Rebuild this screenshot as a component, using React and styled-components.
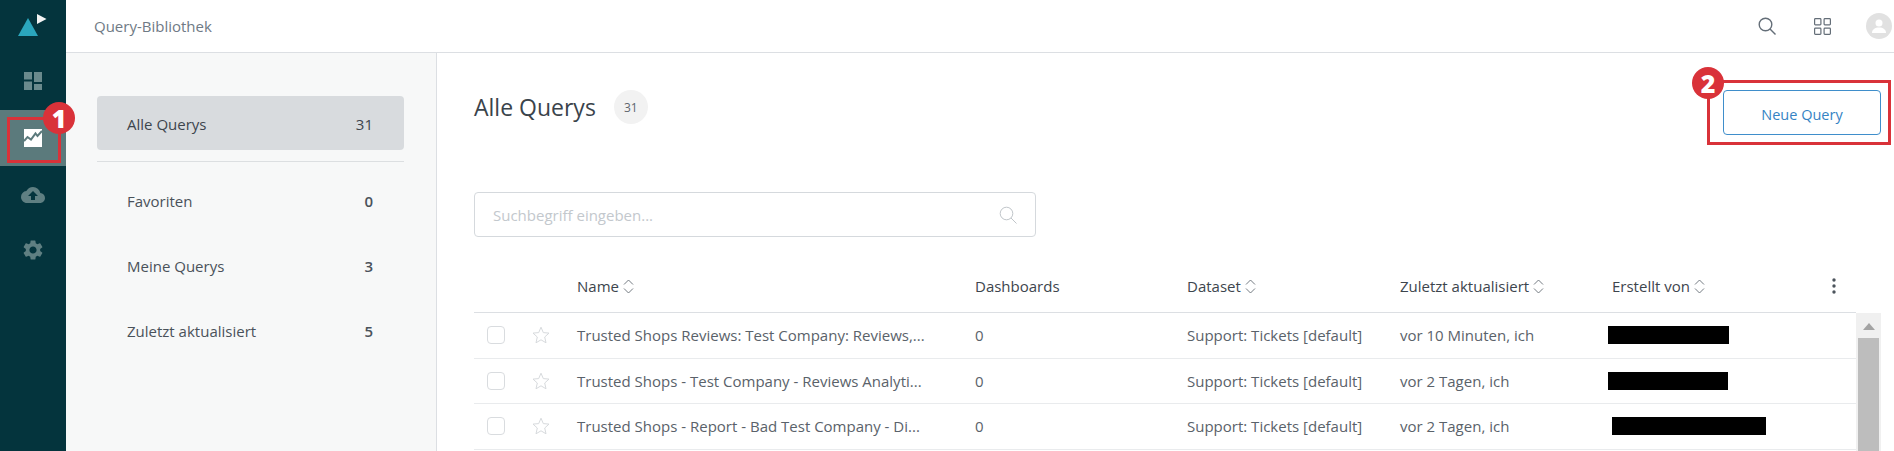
import React from "react";
import styled, { createGlobalStyle } from "styled-components";
import { MdCloudUpload, MdSettings } from "react-icons/md";

const Global = createGlobalStyle`
  html, body { margin: 0; padding: 0; background: #fff; }
  body { font-family: "Open Sans", "Noto Sans", Arial, sans-serif; color: #3a424a; }
  * { box-sizing: border-box; }
`;

const Page = styled.div`
  display: flex;
  width: 1894px;
  height: 451px;
  overflow: hidden;
  background: #fff;
`;

const Sidebar = styled.nav`
  width: 66px;
  flex: none;
  background: #04343d;
  display: flex;
  flex-direction: column;
`;

const Logo = styled.div`
  height: 52px;
  display: flex;
  padding: 14px 0 0 18px;
`;

const NavItem = styled.div`
  position: relative;
  height: ${(p) => p.$h}px;
  display: flex;
  align-items: center;
  justify-content: center;
  color: #5f7f82;
  background: ${(p) => (p.$active ? "#5b7a7c" : "transparent")};
`;

const Badge = styled.span`
  position: absolute;
  left: ${(p) => p.$x}px;
  top: ${(p) => p.$y}px;
  width: 32px;
  height: 32px;
  border-radius: 50%;
  background: #d93239;
  color: #fff;
  font-family: "Open Sans", sans-serif;
  font-weight: 800;
  font-size: 25px;
  line-height: 32px;
  text-align: center;
  z-index: 3;
`;

const NavBox = styled.span`
  position: absolute;
  left: 7px;
  top: 7px;
  width: 54px;
  height: 46px;
  border: 3px solid #d93239;
`;

const Main = styled.div`
  flex: 1;
  min-width: 0;
  display: flex;
  flex-direction: column;
`;

const Header = styled.header`
  height: 53px;
  flex: none;
  border-bottom: 1px solid #dcdfe3;
  display: flex;
  align-items: center;
  padding: 0 2px 0 28px;
`;

const HeaderTitle = styled.div`
  flex: 1;
  font-size: 15px;
  color: #6f7a85;
`;

const HeaderIcons = styled.div`
  display: flex;
  align-items: center;
  color: #646e78;
`;

const IconSlot = styled.span`
  display: flex;
  margin-right: ${(p) => p.$mr}px;
`;

const Avatar = styled.div`
  width: 26px;
  height: 26px;
  border-radius: 50%;
  background: #e1e1e1;
  display: flex;
  align-items: center;
  justify-content: center;
`;

const Body = styled.div`
  flex: 1;
  min-height: 0;
  display: flex;
`;

const Panel = styled.aside`
  width: 371px;
  flex: none;
  background: #f7f8f8;
  border-right: 1px solid #dcdfe3;
  padding: 43px 32px 0 31px;
`;

const PanelActive = styled.div`
  height: 54px;
  background: #d8dbde;
  border-radius: 4px;
  display: flex;
  align-items: center;
  justify-content: space-between;
  padding: 2px 31px 0 30px;
  font-size: 15px;
  font-weight: 500;
  color: #3d454d;
`;

const PanelDivider = styled.div`
  height: 1px;
  background: #dcdfe1;
  margin: 11px 0 6px;
`;

const PanelRow = styled.div`
  height: 65px;
  display: flex;
  align-items: center;
  justify-content: space-between;
  padding: 0 31px 0 30px;
  font-size: 15px;
  color: #4a525a;
`;

const PanelCount = styled.span`
  font-weight: 600;
`;

const Content = styled.section`
  flex: 1;
  min-width: 0;
  padding: 37px 0 0 37px;
  display: flex;
  flex-direction: column;
`;

const TopRow = styled.div`
  height: 45px;
  display: flex;
  align-items: flex-start;
`;

const Title = styled.h1`
  margin: 0;
  font-size: 23px;
  font-weight: 400;
  line-height: 34px;
  color: #3a434b;
`;

const CountPill = styled.span`
  width: 34px;
  height: 34px;
  margin-left: 18px;
  border-radius: 50%;
  background: #f2f2f2;
  color: #5e666e;
  font-size: 12px;
  display: flex;
  align-items: center;
  justify-content: center;
`;

const NewQuery = styled.button`
  position: relative;
  width: 158px;
  height: 45px;
  margin-left: auto;
  margin-right: 13px;
  padding: 3px 0 0;
  background: #fff;
  border: 1px solid #3f8ecb;
  border-radius: 4px;
  color: #3583c4;
  font: 400 14.5px "Open Sans", sans-serif;
`;

const ButtonBox = styled.span`
  position: absolute;
  left: -17px;
  top: -11px;
  width: 184px;
  height: 65px;
  border: 3px solid #d93239;
  pointer-events: none;
`;

const Search = styled.div`
  width: 562px;
  height: 45px;
  margin-top: 57px;
  border: 1px solid #d5d9dd;
  border-radius: 4px;
  display: flex;
  align-items: center;
  justify-content: space-between;
  padding: 0 18px 0 18px;
  color: #c3c8cd;
  font-size: 15px;
`;

const columns = "45px 45px 398px 212px 213px 212px 1fr";

const TableHead = styled.div`
  width: 1382px;
  height: 53px;
  margin-top: 23px;
  padding-left: 13px;
  display: grid;
  grid-template-columns: ${columns};
  align-items: center;
  font-size: 15px;
  font-weight: 500;
  color: #3d454d;
  border-bottom: 1px solid #dcdfe3;
`;

const HeadCell = styled.div`
  display: flex;
  align-items: center;
  gap: 4px;
  grid-column: ${(p) => p.$col};
`;

const Kebab = styled.span`
  margin-left: auto;
  margin-right: 20px;
  display: flex;
  color: #4c545c;
`;

const RowsWrap = styled.div`
  flex: 1;
  min-height: 0;
  display: flex;
`;

const Rows = styled.div`
  width: 1382px;
`;

const Row = styled.div`
  height: 45.5px;
  padding-left: 13px;
  display: grid;
  grid-template-columns: ${columns};
  align-items: center;
  font-size: 15px;
  color: #5a626a;
  border-bottom: 1px solid #e9ebed;
`;

const Check = styled.span`
  width: 18px;
  height: 18px;
  border: 1px solid #d9dcdf;
  border-radius: 4px;
  background: #fff;
`;

const StarSlot = styled.span`
  display: flex;
  color: #d7dadd;
`;

const Cell = styled.div`
  white-space: nowrap;
`;

const Redacted = styled.div`
  position: relative;
  width: ${(p) => p.$w}px;
  height: 18px;
  margin-left: ${(p) => p.$ml}px;
  background: #000;
`;

const Scrollbar = styled.div`
  width: 25px;
  background: #f0f0f0;
  display: flex;
  flex-direction: column;
`;

const ScrollUp = styled.div`
  height: 25px;
  flex: none;
  display: flex;
  justify-content: center;
  padding-top: 10px;
`;

const ScrollThumb = styled.div`
  flex: 1;
  margin: 0 2px;
  background: #bdbdbd;
`;

const Sort = () => (
  <svg width="11" height="15" viewBox="0 0 11 15" fill="none" stroke="#646c74" strokeWidth="0.9">
    <path d="M1 5.5 5.5 1 10 5.5M1 9.5 5.5 14 10 9.5" />
  </svg>
);

const SearchIcon = ({ size, sw, color }) => (
  <svg width={size} height={size} viewBox="0 0 18 18" fill="none" stroke={color} strokeWidth={sw}>
    <circle cx="7.5" cy="7.5" r="6.3" />
    <path d="m12 12 5.5 5.5" />
  </svg>
);

const StarIcon = () => (
  <svg width="18" height="18" viewBox="0 0 18 18" fill="none" stroke="currentColor" strokeWidth="1">
    <path d="M9 1.2 11.3 6.6 17 7.1 12.7 11 14 16.8 9 13.8 4 16.8 5.3 11 1 7.1 6.7 6.6Z" />
  </svg>
);

const rows = [
  ["Trusted Shops Reviews: Test Company: Reviews,...", "vor 10 Minuten, ich", 121, -4],
  ["Trusted Shops - Test Company - Reviews Analyti...", "vor 2 Tagen, ich", 120, -4],
  ["Trusted Shops - Report - Bad Test Company - Di...", "vor 2 Tagen, ich", 154, 0],
];

export default function App() {
  return (
    <Page>
      <Global />
      <Sidebar>
        <Logo>
          <svg width="30" height="24" viewBox="0 0 30 24">
            <path d="M0 22 10 4l10 18Z" fill="#2ba6bd" />
            <path d="M19 0l9.5 5-9.5 5Z" fill="#f3f3f3" />
          </svg>
        </Logo>
        <NavItem $h={58}>
          <svg width="18" height="18" viewBox="0 0 18 18" fill="#6a8a8d">
            <rect x="0" y="0" width="8" height="7.5" />
            <rect x="0" y="9.5" width="8" height="8.5" />
            <rect x="10" y="0" width="8" height="10" />
            <rect x="10" y="12" width="8" height="6" />
          </svg>
        </NavItem>
        <NavItem $h={56} $active>
          <svg width="18" height="18" viewBox="0 0 18 18">
            <rect width="18" height="18" fill="#fff" />
            <path d="M0 12 3.5 8 7 10.5 11.5 4.5 13.5 7 18 2" fill="none" stroke="#5b7a7c" strokeWidth="2" />
          </svg>
          <NavBox />
          <Badge $x={43} $y={-8}>1</Badge>
        </NavItem>
        <NavItem $h={58}>
          <MdCloudUpload size={24} />
        </NavItem>
        <NavItem $h={52}>
          <MdSettings size={24} />
        </NavItem>
      </Sidebar>
      <Main>
        <Header>
          <HeaderTitle>Query-Bibliothek</HeaderTitle>
          <HeaderIcons>
            <IconSlot $mr={38}>
              <SearchIcon size={18} sw={1.4} color="currentColor" />
            </IconSlot>
            <IconSlot $mr={35}>
              <svg width="17" height="17" viewBox="0 0 17 17" fill="none" stroke="currentColor" strokeWidth="1.2">
                <rect x="0.6" y="0.6" width="6.3" height="6.3" rx="0.8" />
                <rect x="10.1" y="0.6" width="6.3" height="6.3" rx="0.8" />
                <rect x="0.6" y="10.1" width="6.3" height="6.3" rx="0.8" />
                <rect x="10.1" y="10.1" width="6.3" height="6.3" rx="0.8" />
              </svg>
            </IconSlot>
            <Avatar>
              <svg width="14" height="14" viewBox="0 0 14 14" fill="#fff">
                <circle cx="7" cy="4" r="3.5" />
                <path d="M0 14c0-3.6 3-5.5 7-5.5s7 1.9 7 5.5Z" />
              </svg>
            </Avatar>
          </HeaderIcons>
        </Header>
        <Body>
          <Panel>
            <PanelActive>
              <span>Alle Querys</span>
              <span>31</span>
            </PanelActive>
            <PanelDivider />
            <PanelRow>
              <span>Favoriten</span>
              <PanelCount>0</PanelCount>
            </PanelRow>
            <PanelRow>
              <span>Meine Querys</span>
              <PanelCount>3</PanelCount>
            </PanelRow>
            <PanelRow>
              <span>Zuletzt aktualisiert</span>
              <PanelCount>5</PanelCount>
            </PanelRow>
          </Panel>
          <Content>
            <TopRow>
              <Title>Alle Querys</Title>
              <CountPill>31</CountPill>
              <NewQuery>
                Neue Query
                <ButtonBox />
                <Badge $x={-32} $y={-24}>2</Badge>
              </NewQuery>
            </TopRow>
            <Search>
              <span>Suchbegriff eingeben...</span>
              <SearchIcon size={18} sw={0.9} color="#b9bec3" />
            </Search>
            <TableHead>
              <HeadCell $col={3}>Name <Sort /></HeadCell>
              <HeadCell $col={4}>Dashboards</HeadCell>
              <HeadCell $col={5}>Dataset <Sort /></HeadCell>
              <HeadCell $col={6}>Zuletzt aktualisiert <Sort /></HeadCell>
              <HeadCell $col={7}>
                Erstellt von <Sort />
                <Kebab>
                  <svg width="4" height="16" viewBox="0 0 4 16" fill="currentColor">
                    <circle cx="2" cy="2" r="1.7" />
                    <circle cx="2" cy="8" r="1.7" />
                    <circle cx="2" cy="14" r="1.7" />
                  </svg>
                </Kebab>
              </HeadCell>
            </TableHead>
            <RowsWrap>
              <Rows>
                {rows.map(([name, updated, w, ml]) => (
                  <Row key={name}>
                    <Check />
                    <StarSlot><StarIcon /></StarSlot>
                    <Cell>{name}</Cell>
                    <Cell>0</Cell>
                    <Cell>Support: Tickets [default]</Cell>
                    <Cell>{updated}</Cell>
                    <Redacted $w={w} $ml={ml} />
                  </Row>
                ))}
              </Rows>
              <Scrollbar>
                <ScrollUp>
                  <svg width="12" height="7" viewBox="0 0 12 7" fill="#a3a3a3">
                    <path d="M6 0l6 7H0Z" />
                  </svg>
                </ScrollUp>
                <ScrollThumb />
              </Scrollbar>
            </RowsWrap>
          </Content>
        </Body>
      </Main>
    </Page>
  );
}
